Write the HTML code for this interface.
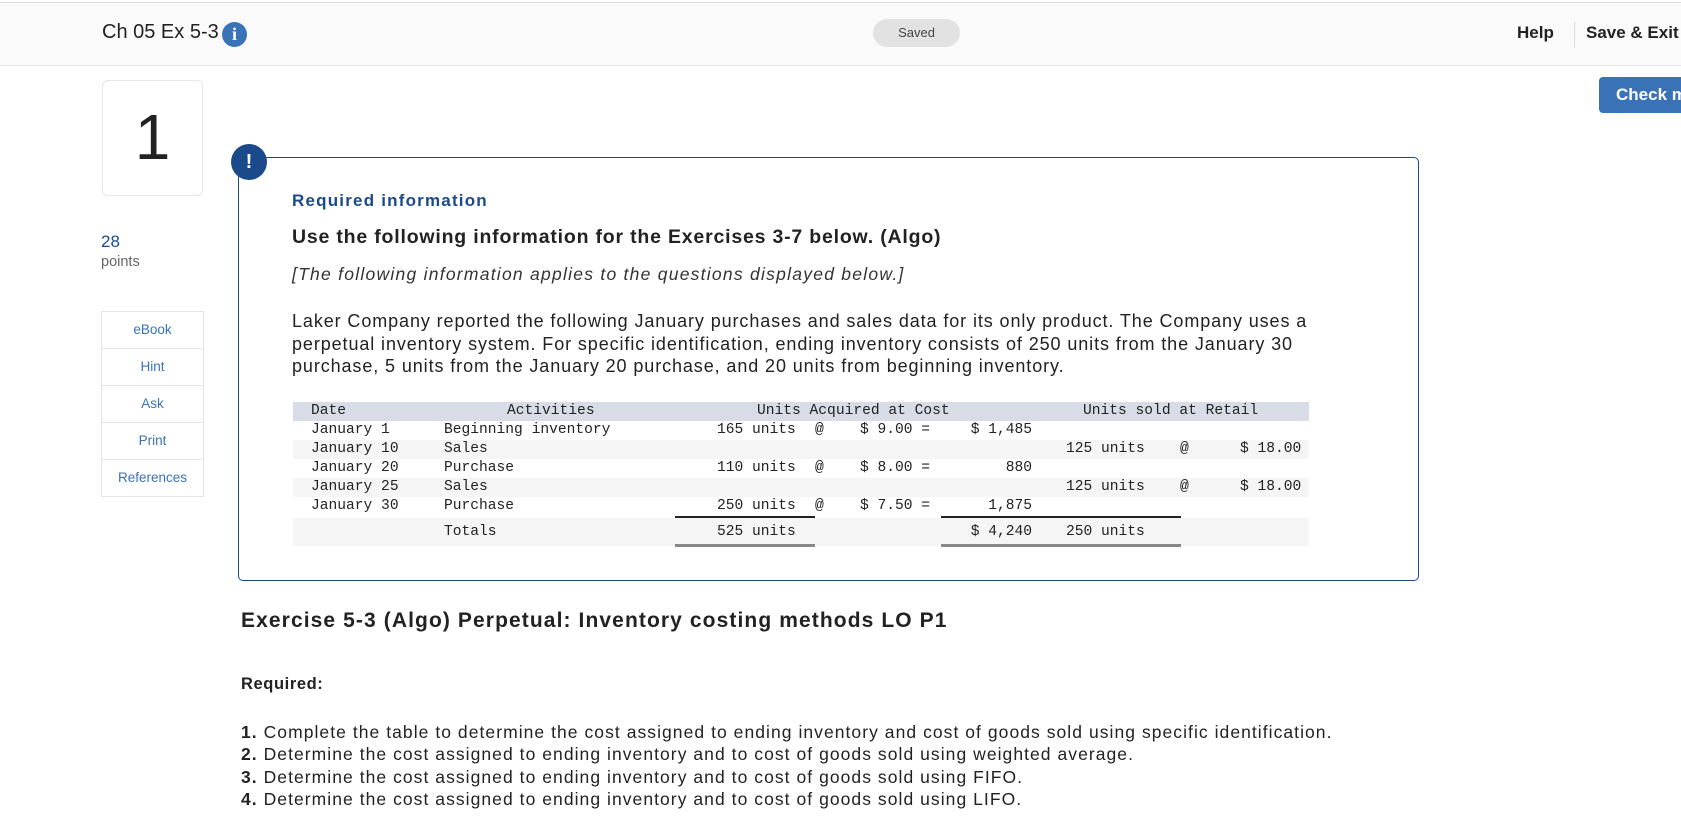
<!DOCTYPE html>
<html><head><meta charset="utf-8"><style>
*{margin:0;padding:0;box-sizing:border-box}
body{width:1681px;height:820px;overflow:hidden;background:#fff;font-family:"Liberation Sans",sans-serif;color:#222;position:relative}
.a{position:absolute;white-space:nowrap}
.hdr{position:absolute;left:0;top:2px;width:1681px;height:64px;background:#fafafa;border-top:1px solid #ddd;border-bottom:1px solid #e8e8e8}
.m{font-family:"Liberation Mono",monospace;font-size:14.6px;color:#222;line-height:19px}
.side div{height:37px;border-bottom:1px solid #e4e4e4;text-align:center;line-height:36px;font-size:13.5px;color:#3a72b8}
</style></head><body>
<div class="hdr"></div>
<div class="a" style="left:102px;top:21px;font-size:20px;color:#222">Ch 05 Ex 5-3</div>
<div class="a" style="left:222px;top:22px;width:25px;height:25px;border-radius:50%;background:#3a72b8;color:#fff;font:bold 18px 'Liberation Serif',serif;text-align:center;line-height:25px">i</div>
<div class="a" style="left:873px;top:19px;width:87px;height:28px;border-radius:14px;background:#e2e2e2;font-size:13px;color:#444;text-align:center;line-height:28px">Saved</div>
<div class="a" style="left:1517px;top:23px;font-size:17px;font-weight:bold">Help</div>
<div class="a" style="left:1574px;top:22px;width:1px;height:25px;background:#ddd"></div>
<div class="a" style="left:1586px;top:23px;font-size:17px;font-weight:bold">Save &amp; Exit</div>
<div class="a" style="left:1599px;top:77px;width:100px;height:36px;border-radius:4px;background:#3a72b8;color:#fff;font-size:17px;font-weight:bold;padding:8px 0 0 17px">Check my work</div>

<div class="a" style="left:102px;top:80px;width:101px;height:116px;border:1px solid #e6e6e6;border-radius:6px;text-align:center;font-size:64px;line-height:112px;color:#222">1</div>
<div class="a" style="left:101px;top:232px;font-size:17px;color:#1a4a8a">28</div>
<div class="a" style="left:101px;top:254px;font-size:14.5px;color:#666">points</div>
<div class="a side" style="left:101px;top:311px;width:103px;border:1px solid #e4e4e4;border-bottom:none">
<div>eBook</div><div>Hint</div><div>Ask</div><div>Print</div><div>References</div></div>

<div class="a" style="left:238px;top:157px;width:1181px;height:424px;border:1.5px solid #1a4a8a;border-radius:5px"></div>
<div class="a" style="left:231px;top:144px;width:36px;height:36px;border-radius:50%;background:#1a4a8a;color:#fff;font-weight:bold;font-size:20px;text-align:center;line-height:36px">!</div>
<div class="a" style="left:292px;top:191px;font-size:17px;font-weight:bold;color:#1a4a8a;letter-spacing:1.2px">Required information</div>
<div class="a" style="left:292px;top:226px;font-size:19.5px;font-weight:bold;color:#222;letter-spacing:0.8px">Use the following information for the Exercises 3-7 below. (Algo)</div>
<div class="a" style="left:292px;top:264px;font-size:17.5px;font-style:italic;color:#333;letter-spacing:1.25px">[The following information applies to the questions displayed below.]</div>
<div class="a" style="left:292px;top:310px;font-size:18px;line-height:22.5px;color:#222;letter-spacing:0.9px">Laker Company reported the following January purchases and sales data for its only product. The Company uses a<br>perpetual inventory system. For specific identification, ending inventory consists of 250 units from the January 30<br>purchase, 5 units from the January 20 purchase, and 20 units from beginning inventory.</div>

<div class="a" style="left:293px;top:402px;width:1016px;height:19px;background:#d8dce6"></div>
<div class="a" style="left:293px;top:440px;width:1016px;height:19px;background:#f5f5f5"></div>
<div class="a" style="left:293px;top:478px;width:1016px;height:19px;background:#f5f5f5"></div>
<div class="a" style="left:293px;top:518px;width:1016px;height:28px;background:#f5f5f5"></div>
<div class="a" style="left:675px;top:516px;width:140px;height:1.5px;background:#222"></div>
<div class="a" style="left:941px;top:516px;width:240px;height:1.5px;background:#222"></div>
<div class="a" style="left:675px;top:544px;width:140px;height:3px;background:#888"></div>
<div class="a" style="left:941px;top:544px;width:240px;height:3px;background:#888"></div>

<div class="a m" style="left:311px;top:402px">Date<br>January 1<br>January 10<br>January 20<br>January 25<br>January 30</div>
<div class="a m" style="left:507px;top:402px">Activities</div>
<div class="a m" style="left:444px;top:421px">Beginning inventory<br>Sales<br>Purchase<br>Sales<br>Purchase</div>
<div class="a m" style="left:444px;top:523px">Totals</div>
<div class="a m" style="left:757px;top:402px">Units Acquired at Cost</div>
<div class="a m" style="left:1083px;top:402px">Units sold at Retail</div>
<div class="a m" style="left:717px;top:421px">165 units<br><br>110 units<br><br>250 units</div>
<div class="a m" style="left:717px;top:523px">525 units</div>
<div class="a m" style="left:815px;top:421px">@<br><br>@<br><br>@</div>
<div class="a m" style="left:860px;top:421px">$ 9.00 =<br><br>$ 8.00 =<br><br>$ 7.50 =</div>
<div class="a m" style="left:940px;top:421px;width:92px;text-align:right">$ 1,485<br><br>880<br><br>1,875</div>
<div class="a m" style="left:940px;top:523px;width:92px;text-align:right">$ 4,240</div>
<div class="a m" style="left:1066px;top:421px"><br>125 units<br><br>125 units</div>
<div class="a m" style="left:1066px;top:523px">250 units</div>
<div class="a m" style="left:1180px;top:421px"><br>@<br><br>@</div>
<div class="a m" style="left:1240px;top:421px"><br>$ 18.00<br><br>$ 18.00</div>

<div class="a" style="left:241px;top:609px;font-size:21px;font-weight:bold;color:#222;letter-spacing:1.1px">Exercise 5-3 (Algo) Perpetual: Inventory costing methods LO P1</div>
<div class="a" style="left:241px;top:675px;font-size:16.5px;font-weight:bold;color:#222;letter-spacing:0.6px">Required:</div>
<div class="a" style="left:241px;top:721px;font-size:17.5px;line-height:22.3px;color:#222;letter-spacing:1.05px"><b>1.</b> Complete the table to determine the cost assigned to ending inventory and cost of goods sold using specific identification.<br><b>2.</b> Determine the cost assigned to ending inventory and to cost of goods sold using weighted average.<br><b>3.</b> Determine the cost assigned to ending inventory and to cost of goods sold using FIFO.<br><b>4.</b> Determine the cost assigned to ending inventory and to cost of goods sold using LIFO.</div>
</body></html>
